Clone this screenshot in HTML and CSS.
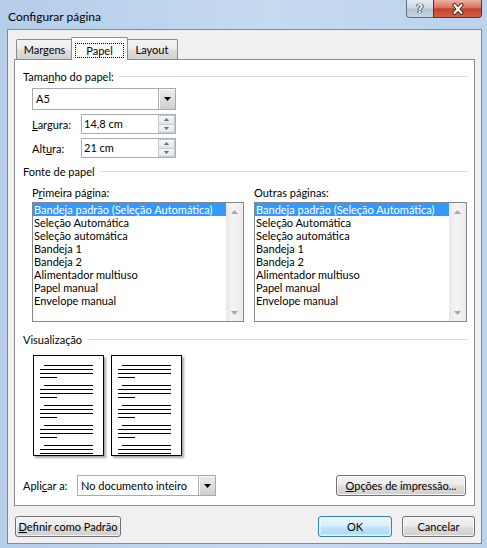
FILE: index.html
```html
<!DOCTYPE html>
<html lang="pt">
<head>
<meta charset="utf-8">
<title>Configurar página</title>
<link rel="stylesheet" href="styles.css">
</head>
<body>
<div class="window">
  <div class="titlebar">
    <span class="title">Configurar página</span>
    <div class="caption">
      <div class="cap-btn help"><span class="help-glyph">?</span></div>
      <div class="cap-btn close">
        <svg width="14" height="12" viewBox="0 0 14 12">
          <path d="M3.5 2 L10.5 10 M10.5 2 L3.5 10" stroke="#4a1d15" stroke-width="4" stroke-linecap="round" fill="none"/>
          <path d="M3.5 2 L10.5 10 M10.5 2 L3.5 10" stroke="#ffffff" stroke-width="2.2" stroke-linecap="round" fill="none"/>
        </svg>
      </div>
    </div>
  </div>
  <div class="client">
    <div class="tabs">
      <div class="tab tab-margens">Margens</div>
      <div class="tab tab-papel active"><span class="focus">Papel</span></div>
      <div class="tab tab-layout">Layout</div>
    </div>
    <div class="panel">
      <div class="group-header"><span>Tama<u>n</u>ho do papel:</span><i class="rule"></i></div>
      <div class="size-block">
        <div class="combo combo-size">
          <span class="combo-text">A5</span>
          <span class="combo-btn"><svg width="7" height="4" viewBox="0 0 7 4"><path d="M0 0H7L3.5 4Z" fill="#000"/></svg></span>
        </div>
        <div class="field-row">
          <span class="field-label"><u>L</u>argura:</span>
          <div class="spin">
            <span class="spin-text">14,8 cm</span>
            <span class="spin-btns">
              <span class="spin-b"><svg width="5" height="3" viewBox="0 0 5 3"><path d="M0 3H5L2.5 0Z" fill="#5a6d8f"/></svg></span>
              <span class="spin-b"><svg width="5" height="3" viewBox="0 0 5 3"><path d="M0 0H5L2.5 3Z" fill="#5a6d8f"/></svg></span>
            </span>
          </div>
        </div>
        <div class="field-row">
          <span class="field-label">Alt<u>u</u>ra:</span>
          <div class="spin">
            <span class="spin-text">21 cm</span>
            <span class="spin-btns">
              <span class="spin-b"><svg width="5" height="3" viewBox="0 0 5 3"><path d="M0 3H5L2.5 0Z" fill="#5a6d8f"/></svg></span>
              <span class="spin-b"><svg width="5" height="3" viewBox="0 0 5 3"><path d="M0 0H5L2.5 3Z" fill="#5a6d8f"/></svg></span>
            </span>
          </div>
        </div>
      </div>
      <div class="group-header gh-source"><span>Fonte de papel</span><i class="rule"></i></div>
      <div class="sources">
        <div class="source">
          <div class="source-label">P<u>r</u>imeira página:</div>
          <div class="listbox">
            <ul class="items">
              <li class="sel">Bandeja padrão (Seleção Automática)</li>
              <li>Seleção Automática</li>
              <li>Seleção automática</li>
              <li>Bandeja 1</li>
              <li>Bandeja 2</li>
              <li>Alimentador multiuso</li>
              <li>Papel manual</li>
              <li>Envelope manual</li>
            </ul>
            <div class="vscroll">
              <span class="sarrow"><svg width="7" height="4" viewBox="0 0 7 4"><path d="M0 4H7L3.5 0Z" fill="#a8a8a8"/></svg></span>
              <span class="sarrow"><svg width="7" height="4" viewBox="0 0 7 4"><path d="M0 0H7L3.5 4Z" fill="#a8a8a8"/></svg></span>
            </div>
          </div>
        </div>
        <div class="source">
          <div class="source-label">Outras páginas:</div>
          <div class="listbox">
            <ul class="items">
              <li class="sel">Bandeja padrão (Seleção Automática)</li>
              <li>Seleção Automática</li>
              <li>Seleção automática</li>
              <li>Bandeja 1</li>
              <li>Bandeja 2</li>
              <li>Alimentador multiuso</li>
              <li>Papel manual</li>
              <li>Envelope manual</li>
            </ul>
            <div class="vscroll">
              <span class="sarrow"><svg width="7" height="4" viewBox="0 0 7 4"><path d="M0 4H7L3.5 0Z" fill="#a8a8a8"/></svg></span>
              <span class="sarrow"><svg width="7" height="4" viewBox="0 0 7 4"><path d="M0 0H7L3.5 4Z" fill="#a8a8a8"/></svg></span>
            </div>
          </div>
        </div>
      </div>
      <div class="group-header gh-preview"><span>Visualização</span><i class="rule"></i></div>
      <div class="preview">
        <div class="page">
          <div class="grp"><i class="l ind"></i><i class="l"></i><i class="l"></i><i class="l short"></i></div>
          <div class="grp"><i class="l ind"></i><i class="l"></i><i class="l"></i><i class="l short"></i></div>
          <div class="grp"><i class="l ind"></i><i class="l"></i><i class="l"></i><i class="l short"></i></div>
          <div class="grp"><i class="l ind"></i><i class="l"></i><i class="l"></i><i class="l short"></i></div>
          <div class="grp"><i class="l ind"></i><i class="l"></i><i class="l"></i><i class="l short"></i></div>
        </div>
        <div class="page">
          <div class="grp"><i class="l ind"></i><i class="l"></i><i class="l"></i><i class="l short"></i></div>
          <div class="grp"><i class="l ind"></i><i class="l"></i><i class="l"></i><i class="l short"></i></div>
          <div class="grp"><i class="l ind"></i><i class="l"></i><i class="l"></i><i class="l short"></i></div>
          <div class="grp"><i class="l ind"></i><i class="l"></i><i class="l"></i><i class="l short"></i></div>
          <div class="grp"><i class="l ind"></i><i class="l"></i><i class="l"></i><i class="l short"></i></div>
        </div>
      </div>
      <div class="apply-row">
        <span class="apply-label">Apli<u>c</u>ar a:</span>
        <div class="combo combo-apply">
          <span class="combo-text">No documento inteiro</span>
          <span class="combo-btn"><svg width="7" height="4" viewBox="0 0 7 4"><path d="M0 0H7L3.5 4Z" fill="#000"/></svg></span>
        </div>
        <div class="btn btn-print"><span><u>O</u>pções de impressão...</span></div>
      </div>
    </div>
    <div class="footer">
      <div class="btn btn-default"><span><u>D</u>efinir como Padrão</span></div>
      <div class="btn btn-ok"><span>OK</span></div>
      <div class="btn btn-cancel"><span>Cancelar</span></div>
    </div>
  </div>
</div>
</body>
</html>
```

FILE: styles.css
```css
* { box-sizing: border-box; }

body {
  margin: 0;
  font-family: "Lato", "Liberation Sans", sans-serif;
  font-size: 11px;
  line-height: 15px;
  color: #000;
}

u { text-decoration: underline; text-underline-offset: 1px; }

.window {
  width: 487px;
  height: 548px;
  display: flex;
  flex-direction: column;
  padding: 0 5px 4px 7px;
  background: linear-gradient(to right, #b4cde9 0%, #c6daf0 55%, #bcd3ec 100%);
}

.titlebar {
  height: 29px;
  display: flex;
  align-items: flex-start;
  flex: none;
}

.title {
  padding: 9px 0 0 1px;
  font-size: 12px;
  line-height: 15px;
}

.caption {
  margin-left: auto;
  display: flex;
}

.cap-btn {
  height: 18px;
  display: flex;
  align-items: center;
  justify-content: center;
  border: 1px solid #5f6f83;
  border-top: none;
}

.help {
  width: 27px;
  border-right: none;
  border-radius: 0 0 0 4px;
  background: linear-gradient(#e6ecf3 0%, #ccd7e3 48%, #b5c3d3 52%, #c8d4e1 100%);
}

.help-glyph {
  font-family: "DejaVu Sans", sans-serif;
  font-size: 12px;
  font-weight: bold;
  color: #eef2f6;
  line-height: 12px;
  text-shadow: 0 0 1px #2d3a4a, 0 0 1px #2d3a4a, 1px 0 0 #55606e, -1px 0 0 #55606e;
}

.close {
  width: 49px;
  border-color: #6a2c21;
  border-radius: 0 0 4px 0;
  background: linear-gradient(#eab0a3 0%, #d87561 45%, #c4422b 52%, #d2614a 100%);
}

.client {
  flex: 1;
  display: flex;
  flex-direction: column;
  background: #f0f0f0;
  border: 1px solid #7b8ca1;
  padding: 7px 6px 0 6px;
}

/* Tabs */
.tabs {
  height: 22px;
  display: flex;
  align-items: flex-end;
  padding-left: 2px;
  flex: none;
}

.tab {
  height: 20px;
  border: 1px solid #898c95;
  border-bottom: none;
  border-radius: 2px 2px 0 0;
  background: linear-gradient(#f3f3f3 0%, #ebebeb 48%, #dedede 52%, #d2d2d2 100%);
  text-align: center;
  padding-top: 2px;
  line-height: 15px;
}

.tab-margens { width: 57px; }
.tab-layout { width: 52px; }

.tab.active {
  position: relative;
  z-index: 2;
  width: 57px;
  height: 23px;
  margin: 0 -2px -1px;
  background: #fff;
  padding-top: 5px;
}

.focus {
  display: inline-block;
  border: 1px dotted #000;
  padding: 0 10px;
  line-height: 13px;
}

/* Panel */
.panel {
  height: 447px;
  flex: none;
  display: flex;
  flex-direction: column;
  background: #fff;
  border: 1px solid #898c95;
  padding: 9px 6px 9px 8px;
}

.group-header {
  display: flex;
  align-items: center;
  height: 15px;
  white-space: nowrap;
}

.rule {
  flex: 1;
  height: 1px;
  background: #dcdfe3;
  margin-left: 5px;
}

.gh-source { margin-top: 6px; }
.gh-preview { margin-top: 10px; }

.size-block {
  padding-left: 9px;
  margin-top: 4px;
}

.combo {
  display: flex;
  border: 1px solid #a6abb2;
  background: #fff;
}

.combo-size { width: 144px; height: 22px; }

.combo-text {
  flex: 1;
  padding-left: 3px;
  line-height: 20px;
  white-space: nowrap;
}

.combo-btn {
  width: 17px;
  display: flex;
  align-items: center;
  justify-content: center;
  background: linear-gradient(#ececec, #d0d0d0);
  border-left: 1px solid #b0b0b0;
  box-shadow: inset 1px 1px 0 #fafafa;
}

.field-row {
  display: flex;
  align-items: center;
  height: 20px;
  margin-top: 4px;
}

.field-label { width: 49px; }

.spin {
  width: 95px;
  height: 20px;
  display: flex;
  border: 1px solid #abadb3;
  background: #fff;
}

.spin-text {
  flex: 1;
  padding-left: 2px;
  line-height: 18px;
}

.spin-btns {
  width: 17px;
  display: flex;
  flex-direction: column;
}

.spin-b {
  flex: 1;
  display: flex;
  align-items: center;
  justify-content: center;
  background: linear-gradient(#f6f6f6, #e3e5e8);
  border: 1px solid #c6cbd2;
}

.spin-b + .spin-b { border-top: none; }

/* Paper source lists */
.sources {
  display: grid;
  grid-template-columns: 212px 213px;
  column-gap: 10px;
  padding-left: 9px;
  margin-top: 6px;
}

.source-label { height: 15px; }

.listbox {
  margin-top: 2px;
  height: 120px;
  display: flex;
  border: 1px solid #828790;
  background: #fff;
}

.items {
  flex: 1;
  list-style: none;
  margin: 0;
  padding: 0;
  min-width: 0;
}

.items li {
  height: 13px;
  line-height: 13px;
  padding-left: 1px;
  white-space: nowrap;
}

.items li.sel {
  background: #3399ff;
  color: #fff;
}

.vscroll {
  width: 17px;
  display: flex;
  flex-direction: column;
  justify-content: space-between;
  background: linear-gradient(to right, #e8e8e8, #f4f4f4 40%, #ececec);
}

.sarrow {
  height: 17px;
  display: flex;
  align-items: center;
  justify-content: center;
}

/* Preview */
.preview {
  display: flex;
  gap: 7px;
  padding-left: 10px;
  margin-top: 8px;
}

.page {
  width: 71px;
  height: 101px;
  border: 1px solid #000;
  background: #fff;
  box-shadow: 2px 2px 2px rgba(0, 0, 0, 0.35);
  padding: 9px 0 0 6px;
  overflow: hidden;
}

.grp {
  display: flex;
  flex-direction: column;
  margin-bottom: 4px;
}

.l {
  display: block;
  height: 1px;
  width: 53px;
  background: #000;
  margin-bottom: 3px;
}

.l.ind { margin-left: 4px; width: 49px; }
.l.short { width: 17px; }

/* Apply row */
.apply-row {
  margin-top: auto;
  display: flex;
  align-items: center;
  height: 21px;
}

.apply-label { width: 54px; }

.combo-apply { width: 139px; height: 21px; }
.combo-apply .combo-text { line-height: 19px; }

.btn {
  height: 21px;
  display: flex;
  align-items: center;
  justify-content: center;
  border: 1px solid #707070;
  border-radius: 3px;
  background: linear-gradient(#f2f2f2 0%, #ebebeb 48%, #dddddd 52%, #cfcfcf 100%);
  box-shadow: inset 0 0 0 1px rgba(255, 255, 255, 0.75);
  white-space: nowrap;
}

.btn-print {
  width: 130px;
  margin-left: auto;
  margin-right: 2px;
}

/* Footer */
.footer {
  margin-top: 10px;
  display: flex;
  gap: 10px;
  padding-left: 1px;
}

.btn-default { width: 106px; }

.btn-ok {
  width: 74px;
  margin-left: auto;
  border-color: #3c7fb1;
  background: linear-gradient(#eaf6fd 0%, #d9f0fc 48%, #bee6fd 52%, #a7d9f5 100%);
  box-shadow: inset 0 0 0 1px #dff2fc, inset 0 0 0 2px rgba(255, 255, 255, 0.4);
}

.btn-cancel { width: 73px; }
```
